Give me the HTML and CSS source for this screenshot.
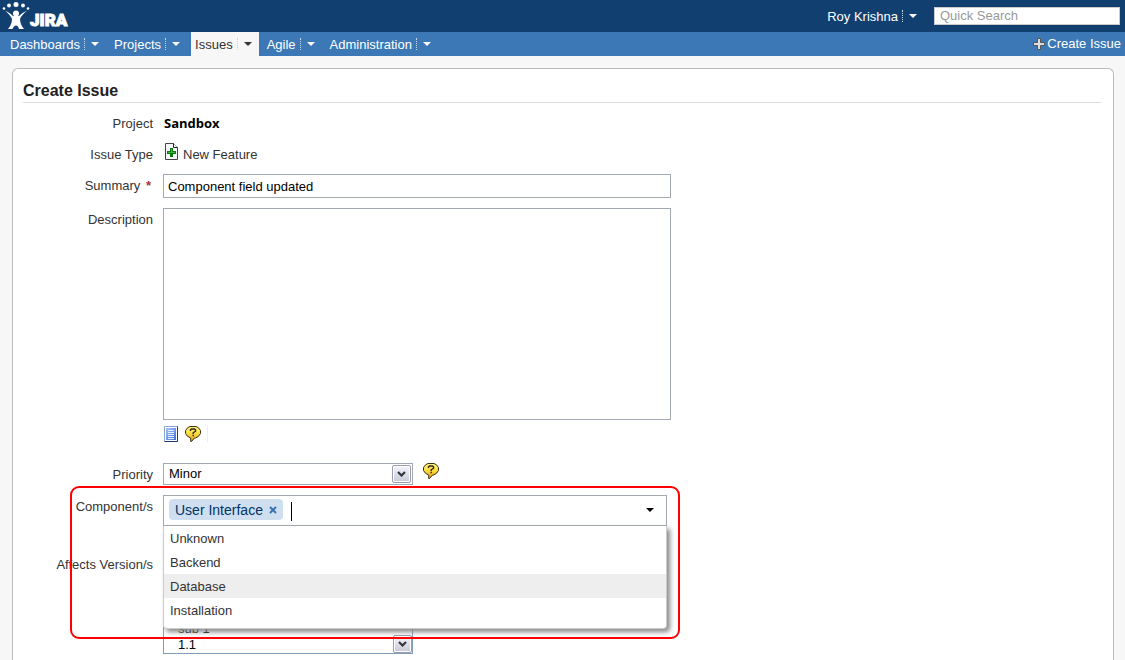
FILE: index.html
```html
<!DOCTYPE html>
<html lang="en">
<head>
    <meta charset="UTF-8">
    <meta name="viewport" content="width=device-width, initial-scale=1.0">
    <title>Create Issue - JIRA</title>
    <link rel="stylesheet" href="styles.css">
</head>
<body>
    <svg class="sprite" aria-hidden="true">
        <symbol id="icon-arrow" viewBox="0 0 8 4">
            <path d="M0 0h8L4 4z" fill="currentColor"/>
        </symbol>
        <symbol id="icon-help" viewBox="0 0 16 16">
            <linearGradient id="bubble" x1="0" y1="0" x2="0" y2="1">
                <stop offset="0" stop-color="#fff58a"/>
                <stop offset=".5" stop-color="#f9d939"/>
                <stop offset="1" stop-color="#e29a1d"/>
            </linearGradient>
            <path d="M5 .5h6l2.500 1.300 2 2.700v3l-2 2.800-3 1.700h-1L6.500 15.500h-.8v-3.500L2.500 10.300.500 7.500v-3l2-2.700z" fill="url(#bubble)" stroke="#3d2f0c"/>
            <path d="M5.500 5V3.800L6.500 3h3l1 .8v1.400L8.200 6.800V8M8.200 8.800v1.400" fill="none" stroke="#2b2514" stroke-width="1.400"/>
        </symbol>
        <symbol id="icon-chevron" viewBox="0 0 9 6">
            <path d="M1 1l3.500 3.500L8 1" fill="none" stroke="#33363d" stroke-width="2.200"/>
        </symbol>
    </svg>

    <header class="header">
        <a class="logo" href="#">
            <svg width="28" height="30" viewBox="0 0 28 30" aria-hidden="true">
                <g fill="#fff">
                    <circle cx="2" cy="7.500" r="1.300"/>
                    <circle cx="7" cy="4.500" r="1.900"/>
                    <circle cx="14" cy="3.500" r="2.500"/>
                    <circle cx="21" cy="4.500" r="1.900"/>
                    <circle cx="26" cy="7.500" r="1.300"/>
                    <circle cx="14" cy="12.500" r="3"/>
                    <path d="M3 9.500c3 1.500 6 3.500 8 5.500h6c2-2 5-4 8-5.500-3.500 3-6 6-7 8.500 0 3.500 1.500 7 4 10h-5c-.5-2-1.500-3.500-3-3.500S11.500 26 10.500 28H6c2.500-3 4-6.500 4-10-1-2.500-3.500-5.500-7-8.500z"/>
                </g>
            </svg>
            <span class="logo-name">JIRA</span>
        </a>
        <a class="menu-link user" href="#">
            <span class="menu-text">Roy Krishna</span>
            <svg class="arrow"><use href="#icon-arrow"/></svg>
        </a>
        <input class="search" type="search" placeholder="Quick Search" aria-label="Quick Search">
    </header>

    <nav class="nav">
        <a class="menu-link" href="#"><span class="menu-text">Dashboards</span><svg class="arrow"><use href="#icon-arrow"/></svg></a>
        <a class="menu-link" href="#"><span class="menu-text">Projects</span><svg class="arrow"><use href="#icon-arrow"/></svg></a>
        <a class="menu-link active" href="#"><span class="menu-text">Issues</span><svg class="arrow"><use href="#icon-arrow"/></svg></a>
        <a class="menu-link" href="#"><span class="menu-text">Agile</span><svg class="arrow"><use href="#icon-arrow"/></svg></a>
        <a class="menu-link" href="#"><span class="menu-text">Administration</span><svg class="arrow"><use href="#icon-arrow"/></svg></a>
        <a class="create-link" href="#">
            <svg width="12" height="12" viewBox="0 0 12 12" aria-hidden="true">
                <path d="M4.500.5h3v4h4v3h-4v4h-3v-4h-4v-3h4z" fill="#ddd" stroke="#555"/>
            </svg>
            Create Issue
        </a>
    </nav>

    <main class="panel">
        <h1 class="title">Create Issue</h1>

        <form class="form">
            <div class="row">
                <span class="label">Project</span>
                <strong class="project">Sandbox</strong>
            </div>

            <div class="row row-type">
                <span class="label">Issue Type</span>
                <span class="issue-type">
                    <svg width="15" height="17" viewBox="0 0 15 17" aria-hidden="true">
                        <path d="M1.500.5h8l4 4v12h-12z" fill="#f4f7fb" stroke="#444"/>
                        <path d="M9.500.5v4h4" fill="#fff" stroke="#222"/>
                        <path d="M6 5h3v3h3v3H9v3H6v-3H3V8h3z" fill="#0a7a0a"/>
                        <path d="M7 6h1v3h3v1H4V9h3z" fill="#3cb43c"/>
                    </svg>
                    New Feature
                </span>
            </div>

            <div class="row">
                <label class="label" for="summary">Summary <span class="required">*</span></label>
                <input class="text-input" id="summary" type="text" value="Component field updated">
            </div>

            <div class="row">
                <label class="label" for="description">Description</label>
                <div class="field">
                    <textarea class="text-area" id="description"></textarea>
                    <div class="tools">
                        <button class="icon-button" type="button" aria-label="Preview">
                            <svg width="14" height="16" viewBox="0 0 14 16">
                                <linearGradient id="page" x1="0" y1="0" x2="1" y2="1">
                                    <stop offset="0" stop-color="#a9c6f7"/>
                                    <stop offset="1" stop-color="#3f6fdc"/>
                                </linearGradient>
                                <path d="M.5.5h13v15H.5z" fill="#fff" stroke="#8ba5cf"/>
                                <path d="M13.500.5v15H.5" fill="none" stroke="#1f3a75"/>
                                <path d="M2 2h10v12H2z" fill="url(#page)"/>
                                <path d="M4 4.500h6M4 6.500h6M4 8.500h6M4 10.500h6M4 12.500h6" stroke="#e6effd"/>
                            </svg>
                        </button>
                        <button class="icon-button" type="button" aria-label="Help">
                            <svg width="16" height="16"><use href="#icon-help"/></svg>
                        </button>
                    </div>
                </div>
            </div>

            <div class="row row-priority">
                <label class="label" for="priority">Priority</label>
                <span class="select-wrap">
                    <select class="select" id="priority">
                        <option>Minor</option>
                    </select>
                    <span class="select-button"><svg width="9" height="6"><use href="#icon-chevron"/></svg></span>
                </span>
                <button class="icon-button" type="button" aria-label="Priority help">
                    <svg width="16" height="16"><use href="#icon-help"/></svg>
                </button>
            </div>

            <div class="row row-components">
                <label class="label" for="components">Component/s</label>
                <div class="combo">
                    <span class="tag">User Interface
                        <button class="tag-remove" type="button" aria-label="Remove">
                            <svg width="8" height="8" viewBox="0 0 8 8"><path d="M1 1l6 6M7 1L1 7" stroke="#3b73af" stroke-width="2"/></svg>
                        </button>
                    </span>
                    <span class="caret"></span>
                    <input class="combo-input" id="components" type="text">
                    <button class="combo-toggle" type="button" aria-label="Show components">
                        <svg class="arrow"><use href="#icon-arrow"/></svg>
                    </button>
                    <ul class="options" role="listbox">
                        <li role="option">Unknown</li>
                        <li role="option">Backend</li>
                        <li class="hover" role="option">Database</li>
                        <li role="option">Installation</li>
                    </ul>
                </div>
                <div class="highlight"></div>
            </div>

            <div class="row row-versions">
                <label class="label" for="versions">Affects Version/s</label>
                <span class="list-wrap">
                    <select class="list" id="versions" multiple>
                        <option>sub 1</option>
                        <option>1.1</option>
                    </select>
                    <span class="list-button"><svg width="9" height="6"><use href="#icon-chevron"/></svg></span>
                </span>
            </div>
        </form>
    </main>
</body>
</html>
```
FILE: styles.css
```css
* {
    box-sizing: border-box;
}

body {
    margin: 0;
    min-height: 100vh;
    display: flex;
    flex-direction: column;
    background: #f7f7f7;
    color: #333;
    font: 13px/18px "Liberation Sans", Arial, sans-serif;
}

a {
    color: inherit;
    text-decoration: none;
}

button {
    padding: 0;
    border: 0;
    background: none;
    cursor: pointer;
}

input, select, textarea {
    color: #000;
    font: inherit;
}

svg {
    display: block;
}

.sprite {
    position: absolute;
    width: 0;
    height: 0;
}

/* Top bar */
.header {
    display: flex;
    align-items: center;
    height: 32px;
    padding: 0 5px 0 2px;
    background: #114070;
    color: #fff;
}

.logo {
    display: flex;
    align-items: center;
    margin-right: auto;
}

.logo-name {
    padding-top: 8px;
    font: 900 17px/20px Roboto, "Liberation Sans", sans-serif;
    -webkit-text-stroke: 1px #fff;
}

.search {
    width: 186px;
    height: 18px;
    margin-left: 10px;
    padding: 0 5px;
    border: 1px solid #ccc;
    background: #fff;
    appearance: none;
}

.search::placeholder {
    color: #999;
}

/* Menus */
.nav {
    display: flex;
    align-items: center;
    gap: 4px;
    height: 24px;
    padding: 0 4px 0 6px;
    background: #3c78b5;
    color: #fff;
}

.menu-link {
    display: flex;
    align-items: center;
    height: 24px;
    padding: 0 7px 0 4px;
}

.menu-text {
    height: 12px;
    padding-right: 4px;
    border-right: 1px dotted #c8d8e8;
    line-height: 14px;
}

.arrow {
    width: 8px;
    height: 4px;
    margin-left: 6px;
}

.active {
    background: #f7f7f7;
    color: #333;
}

.create-link {
    display: flex;
    align-items: center;
    gap: 2px;
    margin-left: auto;
}

/* Page */
.panel {
    flex: 1;
    margin: 12px 11px 0 12px;
    padding: 10px 12px 6px 10px;
    border: 1px solid #bbb;
    border-bottom: 0;
    border-radius: 6px 6px 0 0;
    background: #fff;
}

.title {
    margin: 0 0 9px;
    padding: 2px 0 1px;
    border-bottom: 1px solid #ddd;
    color: #222;
    font-size: 16px;
    line-height: 20px;
}

.row {
    display: flex;
    align-items: flex-start;
    gap: 10px;
    margin-bottom: 10px;
}

.label {
    flex: none;
    width: 130px;
    padding-top: 3px;
    text-align: right;
}

.required {
    margin: 0 2px;
    color: #a33;
    font-weight: bold;
}

.project {
    padding: 2px 0 0 1px;
    color: #000;
    font: bold 13px/18px "Open Sans", sans-serif;
}

.row-type {
    margin-bottom: 7px;
}

.issue-type {
    display: flex;
    gap: 4px;
    padding-left: 1px;
    line-height: 24px;
}

.text-input, .text-area {
    width: 508px;
    border: 1px solid #a2a9b0;
    background: #fff;
}

.text-input {
    height: 24px;
    padding: 0 4px;
}

.text-area {
    display: block;
    height: 212px;
    resize: none;
}

.tools {
    display: flex;
    gap: 7px;
    width: 45px;
    height: 17px;
    margin-top: 5px;
    padding-left: 1px;
    border-right: 1px solid #eee;
}

.row-priority {
    margin-top: 21px;
}

.select-wrap, .list-wrap {
    position: relative;
    width: 250px;
}

.select {
    display: block;
    width: 100%;
    height: 22px;
    padding: 0 5px;
    border: 1px solid #a2a9b0;
    border-radius: 0;
    background: #fff;
    appearance: none;
}

.select-button, .list-button {
    position: absolute;
    right: 2px;
    display: flex;
    align-items: center;
    justify-content: center;
    width: 19px;
    height: 18px;
    border: 1px solid #9a9daf;
    border-radius: 2px;
    box-shadow: inset 0 0 0 1px #fff;
    background: linear-gradient(#f5f5fa, #c8c9d8);
    pointer-events: none;
}

.select-button {
    top: 2px;
}

/* Component picker */
.row-components {
    position: relative;
}

.combo {
    position: relative;
    display: flex;
    align-items: center;
    width: 504px;
    height: 31px;
    padding: 0 12px 2px 5px;
    border: 1px solid #a2a9b0;
    background: #fff;
}

.tag {
    display: flex;
    align-items: center;
    gap: 6px;
    height: 21px;
    padding: 0 6px;
    border-radius: 4px;
    background: #cfdff0;
    color: #036;
    font-size: 14px;
}

.caret {
    width: 1px;
    height: 19px;
    margin: 4px 0 0 8px;
    background: #000;
}

.combo-input {
    flex: 1;
    min-width: 0;
    border: 0;
    outline: 0;
}

.combo-toggle {
    color: #000;
}

.options {
    position: absolute;
    z-index: 1;
    top: 30px;
    left: -1px;
    right: -1px;
    margin: 0;
    padding: 0 0 6px;
    border: 1px solid #ccc;
    border-top: 0;
    border-radius: 0 0 4px 4px;
    box-shadow: 3px 3px 5px #888;
    background: #fff;
    list-style: none;
}

.options li {
    padding: 2px 6px 0;
    line-height: 22px;
}

.hover {
    background: #eee;
}

/* Red outline round the component picker */
.highlight {
    position: absolute;
    z-index: 2;
    top: -9px;
    left: 47px;
    width: 610px;
    height: 153px;
    border: 2px solid #f00;
    border-radius: 9px;
    pointer-events: none;
}

.row-versions {
    margin: 27px 0 0;
}

.list {
    display: block;
    width: 100%;
    height: 101px;
    padding: 67px 0 0;
    border: 1px solid #7f9db9;
    border-radius: 0;
    background: #fff;
    overflow: hidden;
}

.list option {
    min-height: 16px;
    padding: 0 14px;
    line-height: 16px;
}

.list-button {
    right: 1px;
    bottom: 1px;
}
```
